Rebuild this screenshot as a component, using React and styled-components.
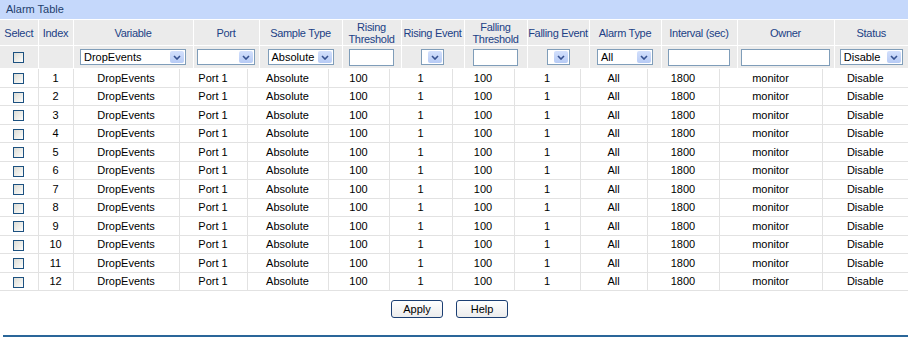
import React from 'react';
import styled, { createGlobalStyle } from 'styled-components';

const GlobalStyle = createGlobalStyle`
  body {
    margin: 0;
    background: #ffffff;
    font-family: "Liberation Sans", Arial, sans-serif;
    font-size: 11px;
  }
`;

const Page = styled.div`
  width: 908px;
  height: 337px;
  display: flex;
  flex-direction: column;
`;

const TitleBar = styled.div`
  height: 19px;
  line-height: 19px;
  background: #c5d8fb;
  color: #233e6c;
  padding-left: 6px;
  border-bottom: 1px solid #ffffff;
`;

const Table = styled.table`
  width: 908px;
  table-layout: fixed;
  border-collapse: collapse;
`;

const HeadCell = styled.th`
  background: #ebebeb;
  color: #213f86;
  font-weight: normal;
  text-align: center;
  white-space: nowrap;
  letter-spacing: -0.3px;
  height: ${p => p.$h}px;
  padding: 0;
  line-height: 12px;
  border-left: 1px solid #ffffff;
  border-bottom: 1px solid #ffffff;
  &:first-child { border-left: none; }
`;

const Cell = styled.td`
  text-align: center;
  height: 17.5px;
  padding: 0;
  color: #000;
  border-left: 1px solid #e2e2e2;
  border-bottom: 1px solid #e2e2e2;
  &:first-child { border-left: none; }
`;

const Box = styled.span`
  display: inline-block;
  width: 9px;
  height: 9px;
  border: 1px solid #1c5180;
  background: linear-gradient(135deg, #dcdcd6 0%, #f3f3ef 70%, #ffffff 100%);
  vertical-align: middle;
`;

const Select = styled.div`
  display: inline-flex;
  align-items: center;
  justify-content: space-between;
  box-sizing: border-box;
  width: ${p => p.$w}px;
  height: 16px;
  border: 1px solid #7f9db9;
  background: #fff;
  color: #000;
  letter-spacing: 0;
  padding-left: 3px;
  padding-right: 1px;
  vertical-align: middle;
  text-align: left;
`;

const Arrow = styled.span`
  width: 14px;
  height: 12px;
  border-radius: 2px;
  background: linear-gradient(#d3e0fc, #b7cbf5);
  display: flex;
  align-items: center;
  justify-content: center;
`;

const Input = styled.div`
  display: inline-block;
  box-sizing: border-box;
  width: ${p => p.$w}px;
  height: 17px;
  border: 1px solid #7f9db9;
  background: #fff;
  vertical-align: middle;
`;

const Buttons = styled.div`
  display: flex;
  justify-content: center;
  gap: 13px;
  padding: 9px 9px 0 0;
`;

const Button = styled.div`
  box-sizing: border-box;
  width: 52px;
  height: 18px;
  line-height: 16px;
  text-align: center;
  border: 1px solid #1c3f73;
  border-radius: 3px;
  background: linear-gradient(#ffffff, #ececec);
  color: #000;
`;

const Rule = styled.div`
  margin: auto 0 0 3px;
  height: 2px;
  background: #2a6699;
`;

const headWidths = [38, 35, 120, 66, 83, 59, 63, 63, 62, 72, 76, 97, 74];
const bodyWidths = [38, 35, 106, 68, 81, 61, 63, 62, 66, 67, 72, 103, 86];

const heads = ['Select', 'Index', 'Variable', 'Port', 'Sample Type', ['Rising', 'Threshold'], 'Rising Event',
  ['Falling', 'Threshold'], 'Falling Event', 'Alarm Type', 'Interval (sec)', 'Owner', 'Status'];

function Drop({ w, value }) {
  return (
    <Select $w={w}>
      <span>{value}</span>
      <Arrow>
        <svg width="8" height="5" viewBox="0 0 8 5">
          <path d="M1 1 L4 4 L7 1" fill="none" stroke="#35508f" strokeWidth="1.6" />
        </svg>
      </Arrow>
    </Select>
  );
}

const rows = Array.from({ length: 12 }, (_, i) => i + 1);

export default function App() {
  return (
    <Page>
      <GlobalStyle />
      <TitleBar>Alarm Table</TitleBar>
      <Table>
        <colgroup>{headWidths.map((w, i) => <col key={i} style={{ width: w }} />)}</colgroup>
        <thead>
          <tr>
            {heads.map((h, i) => (
              <HeadCell key={i} $h={25}>{Array.isArray(h) ? <>{h[0]}<br />{h[1]}</> : h}</HeadCell>
            ))}
          </tr>
          <tr>
            <HeadCell $h={22}><Box /></HeadCell>
            <HeadCell $h={22} />
            <HeadCell $h={22}><Drop w={106} value="DropEvents" /></HeadCell>
            <HeadCell $h={22}><Drop w={58} value="" /></HeadCell>
            <HeadCell $h={22}><Drop w={66} value="Absolute" /></HeadCell>
            <HeadCell $h={22}><Input $w={45} /></HeadCell>
            <HeadCell $h={22}><Drop w={23} value="" /></HeadCell>
            <HeadCell $h={22}><Input $w={45} /></HeadCell>
            <HeadCell $h={22}><Drop w={23} value="" /></HeadCell>
            <HeadCell $h={22}><Drop w={56} value="All" /></HeadCell>
            <HeadCell $h={22}><Input $w={62} /></HeadCell>
            <HeadCell $h={22}><Input $w={89} /></HeadCell>
            <HeadCell $h={22}><Drop w={63} value="Disable" /></HeadCell>
          </tr>
        </thead>
      </Table>
      <Table>
        <colgroup>{bodyWidths.map((w, i) => <col key={i} style={{ width: w }} />)}</colgroup>
        <tbody>
          {rows.map(n => (
            <tr key={n}>
              <Cell><Box /></Cell>
              <Cell>{n}</Cell>
              <Cell>DropEvents</Cell>
              <Cell>Port 1</Cell>
              <Cell>Absolute</Cell>
              <Cell>100</Cell>
              <Cell>1</Cell>
              <Cell>100</Cell>
              <Cell>1</Cell>
              <Cell>All</Cell>
              <Cell>1800</Cell>
              <Cell>monitor</Cell>
              <Cell>Disable</Cell>
            </tr>
          ))}
        </tbody>
      </Table>
      <Buttons>
        <Button>Apply</Button>
        <Button>Help</Button>
      </Buttons>
      <Rule />
    </Page>
  );
}
